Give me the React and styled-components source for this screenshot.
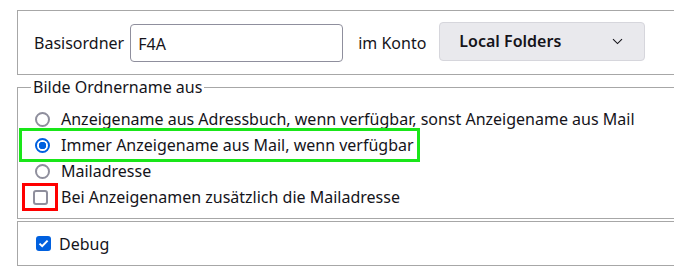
import React, { useState } from 'react';
import styled, { createGlobalStyle } from 'styled-components';

const GlobalStyle = createGlobalStyle`
  html, body {
    margin: 0;
    padding: 0;
    background: #fff;
  }
  body {
    font-family: 'Noto Sans', 'Open Sans', sans-serif;
    font-size: 16px;
    color: #15141a;
  }
`;

const Page = styled.div`
  width: 674px;
  height: 278px;
  overflow: hidden;
  padding: 10px 0 0 17px;
  box-sizing: border-box;
`;

const Box = styled.div`
  width: 700px;
  box-sizing: border-box;
  border: 1px solid #a7a7a7;
  border-right: none;
  display: flex;
  align-items: center;
  height: ${({ h }) => h}px;
  margin-top: ${({ mt }) => mt || 0}px;
  padding-left: ${({ pl }) => pl}px;
`;

const Label = styled.span`
  margin-right: ${({ mr }) => mr || 0}px;
  white-space: nowrap;
`;

const TextInput = styled.input`
  width: 213px;
  height: 38px;
  box-sizing: border-box;
  border: 1px solid #8f8f9d;
  border-radius: 4px;
  padding: 2px 0 0 7px;
  font: inherit;
  color: inherit;
  margin-right: 15px;
  outline: none;
`;

const Select = styled.div`
  width: 206px;
  height: 39px;
  box-sizing: border-box;
  background: #e9e9ed;
  border: 1px solid #d6d6dc;
  border-radius: 4px;
  display: flex;
  align-items: center;
  justify-content: space-between;
  padding: 0 21px 0 19px;
  font-weight: 600;
  margin-top: -3px;
`;

const Fieldset = styled.fieldset`
  width: 700px;
  box-sizing: border-box;
  margin: 2px 0 0;
  border: 1px solid #a7a7a7;
  border-right: none;
  padding: 0 0 8px 5px;
`;

const Legend = styled.legend`
  padding: 0 2px;
  margin-left: 8px;
  line-height: 20px;
`;

const Options = styled.div`
  display: flex;
  flex-direction: column;
  padding-top: 9px;
`;

const Row = styled.label`
  display: flex;
  align-items: center;
  height: 26px;
  width: fit-content;
  padding: 0 2px 0 12px;
  white-space: nowrap;
  outline: ${({ mark }) => (mark ? `3px solid ${mark}` : 'none')};
  outline-offset: 1px;
`;

const Radio = styled.input.attrs({ type: 'radio' })`
  appearance: none;
  width: 15px;
  height: 15px;
  margin: 0 11px 0 0;
  box-sizing: border-box;
  border-radius: 50%;
  border: 2px solid #8f8f9d;
  background: #fff;
  flex-shrink: 0;
  &:checked {
    border-color: #0060df;
    background: radial-gradient(circle, #0060df 0 3.5px, #fff 4px);
  }
`;

const CheckWrap = styled.span`
  display: flex;
  align-items: center;
  justify-content: center;
  margin: 0 ${({ gap }) => gap}px 0 0;
`;

const Check = styled.span`
  width: 15px;
  height: 15px;
  box-sizing: border-box;
  border-radius: 3px;
  border: ${({ on }) => (on ? 'none' : '2px solid #8f8f9d')};
  background: ${({ on }) => (on ? '#0060df' : '#fff')};
  display: flex;
  align-items: center;
  justify-content: center;
`;

const RedMark = styled.span`
  display: flex;
  align-items: center;
  justify-content: center;
  width: 36px;
  height: 28px;
  box-sizing: border-box;
  border: 3px solid #f00;
  margin: 0 3px 0 -13px;
`;

const Chevron = () => (
  <svg width="11" height="7" viewBox="0 0 11 7">
    <path d="M1 1.2 L5.5 5.6 L10 1.2" fill="none" stroke="#15141a" strokeWidth="1.1" />
  </svg>
);

const Tick = () => (
  <svg width="11" height="9" viewBox="0 0 11 9">
    <path d="M1.5 4.6 L4.2 7.2 L9.6 1.6" fill="none" stroke="#fff" strokeWidth="2" />
  </svg>
);

const options = [
  'Anzeigename aus Adressbuch, wenn verfügbar, sonst Anzeigename aus Mail',
  'Immer Anzeigename aus Mail, wenn verfügbar',
  'Mailadresse',
];

export default function App() {
  const [choice, setChoice] = useState(1);
  return (
    <>
      <GlobalStyle />
      <Page>
        <Box h={65} pl={16}>
          <Label mr={6}>Basisordner</Label>
          <TextInput defaultValue="F4A" />
          <Label mr={13}>im Konto</Label>
          <Select>
            <span>Local Folders</span>
            <Chevron />
          </Select>
        </Box>
        <Fieldset>
          <Legend>Bilde Ordnername aus</Legend>
          <Options>
            {options.map((text, i) => (
              <Row key={i} mark={i === 1 ? '#19e619' : null}>
                <Radio name="fmt" checked={choice === i} onChange={() => setChoice(i)} />
                {text}
              </Row>
            ))}
            <Row>
              <RedMark>
                <Check />
              </RedMark>
              Bei Anzeigenamen zusätzlich die Mailadresse
            </Row>
          </Options>
        </Fieldset>
        <Box h={45} mt={2} pl={18}>
          <CheckWrap gap={8}>
            <Check on>
              <Tick />
            </Check>
          </CheckWrap>
          Debug
        </Box>
      </Page>
    </>
  );
}
